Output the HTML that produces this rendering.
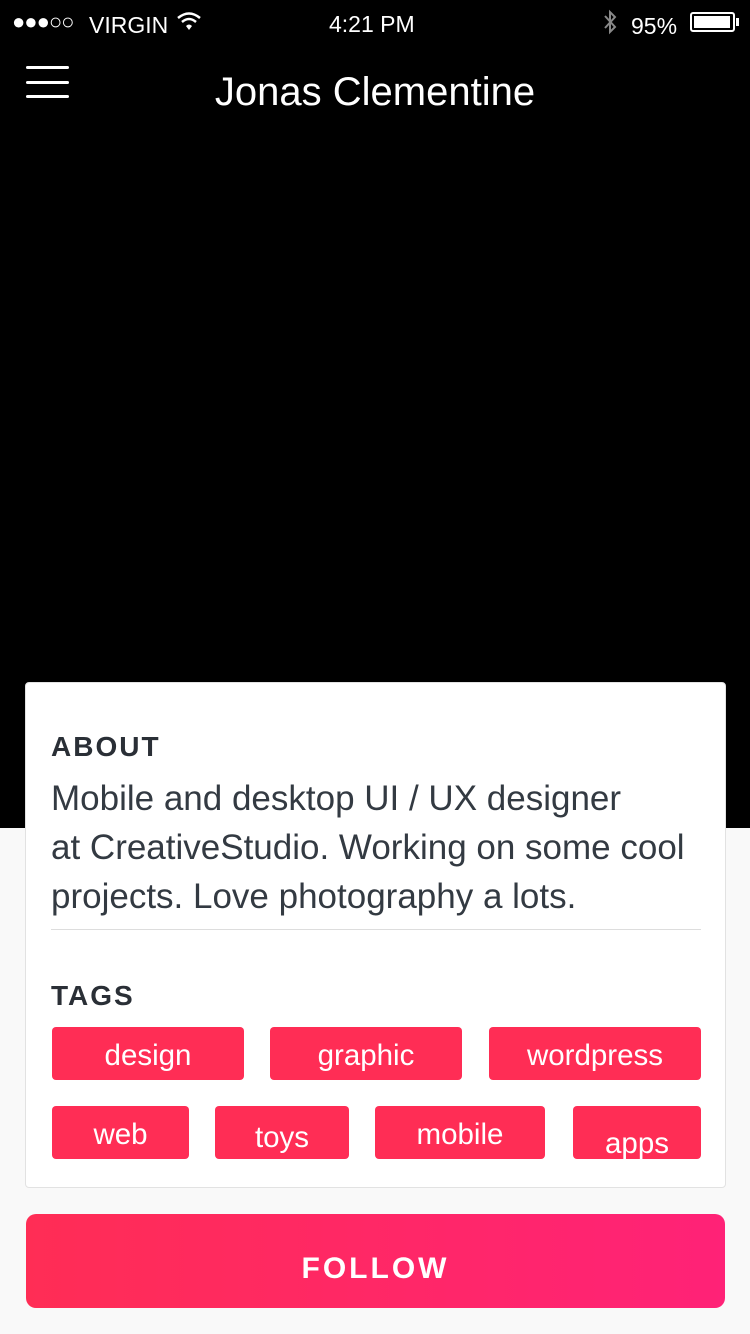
<!DOCTYPE html>
<html><head><meta charset="utf-8"><style>
*{margin:0;padding:0;box-sizing:border-box}
body{width:750px;height:1334px;background:#f9f9f9;position:relative;overflow:hidden;font-family:"Liberation Sans",sans-serif}
.a{position:absolute}
.top{left:0;top:0;width:750px;height:828px;background:#000}
.w{color:#fff}
.card{left:25px;top:682px;width:701px;height:506px;background:#fff;border:1px solid #e2e2e2;border-radius:4px}
.h{font-weight:bold;font-size:28px;letter-spacing:2px;color:#2a2f36}
.tag{background:#ff2d55;color:#fff;border-radius:4px;height:53px;font-size:29.5px;text-align:center;line-height:58px}
.bar{left:26px;width:43px;height:3px;background:#fff;border-radius:2px}
</style></head><body>
<div class="a top"></div>
<div class="a w" style="left:12px;top:9px;font-size:22px;letter-spacing:-1px">●●●○○</div>
<div class="a w" style="left:89px;top:12px;font-size:23px">VIRGIN</div>
<svg class="a" style="left:176px;top:11px" width="26" height="20" viewBox="0 0 26 20"><path d="M2 7 Q13 -2 24 7" stroke="#fff" stroke-width="2.5" fill="none"/><path d="M6 11 Q13 5 20 11" stroke="#fff" stroke-width="2.5" fill="none"/><path d="M10 15 L13 19 L16 15 Q13 12 10 15Z" fill="#fff"/></svg>
<div class="a w" style="left:329px;top:11px;font-size:23px">4:21 PM</div>
<svg class="a" style="left:602px;top:9px" width="16" height="26" viewBox="0 0 16 26"><path d="M3 7 L13 18 L8 23 L8 3 L13 8 L3 19" stroke="#888" stroke-width="2" fill="none"/></svg>
<div class="a w" style="left:631px;top:13px;font-size:23px">95%</div>
<div class="a" style="left:690px;top:12px;width:45px;height:20px;border:2px solid #fff;border-radius:3px;padding:2px"><div style="width:36px;height:12px;background:#fff"></div></div>
<div class="a" style="left:736px;top:18px;width:3px;height:8px;background:#fff"></div>
<div class="a bar" style="top:66px"></div><div class="a bar" style="top:81px"></div><div class="a bar" style="top:95px"></div>
<div class="a w" style="left:0;width:750px;text-align:center;top:70px;font-size:40px">Jonas Clementine</div>
<div class="a card"></div>
<div class="a h" style="left:51px;top:731px">ABOUT</div>
<div class="a" style="left:51px;top:774px;font-size:35px;line-height:49px;color:#333a42;width:680px">Mobile and desktop UI / UX designer<br>at CreativeStudio. Working on some cool<br>projects. Love photography a lots.</div>
<div class="a" style="left:51px;top:929px;width:650px;height:1px;background:#ddd"></div>
<div class="a h" style="left:51px;top:980px">TAGS</div>
<div class="a tag" style="left:52px;top:1027px;width:192px">design</div>
<div class="a tag" style="left:270px;top:1027px;width:192px">graphic</div>
<div class="a tag" style="left:489px;top:1027px;width:212px">wordpress</div>
<div class="a tag" style="left:52px;top:1106px;width:137px">web</div>
<div class="a tag" style="left:215px;top:1106px;width:134px;line-height:64px">toys</div>
<div class="a tag" style="left:375px;top:1106px;width:170px">mobile</div>
<div class="a tag" style="left:573px;top:1106px;width:128px;line-height:76px;overflow:hidden">apps</div>
<div class="a" style="left:26px;top:1214px;width:699px;height:94px;border-radius:10px;background:linear-gradient(90deg,#ff2d55,#ff2277);color:#fff;font-weight:bold;font-size:30px;letter-spacing:3px;text-align:center;line-height:110px">FOLLOW</div>
</body></html>
